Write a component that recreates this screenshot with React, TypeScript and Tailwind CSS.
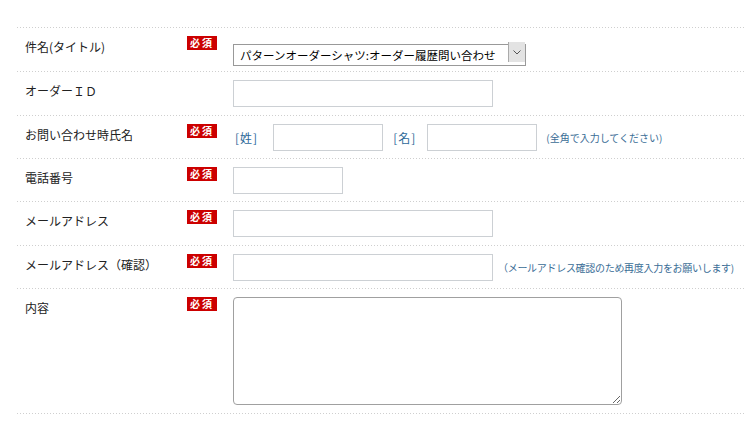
import type { ReactNode } from "react";

const FONT = { fontFamily: '"Noto Sans CJK JP", "Noto Sans", sans-serif' };

function Dots() {
  return (
    <div className="h-px w-full bg-[linear-gradient(to_right,#cfcfcf_1px,transparent_1px)] bg-[length:3px_1px] bg-repeat-x" />
  );
}

function Badge() {
  return (
    <span className="block h-[14px] w-[30px] bg-[#cc0000] text-center text-[10px] leading-[14px] font-bold tracking-[2px] text-white">
      必須
    </span>
  );
}

type RowProps = {
  label: string;
  required?: boolean;
  h: string;
  children: ReactNode;
};

function Row({ label, required = true, h, children }: RowProps) {
  return (
    <>
      <Dots />
      <div className={`flex pt-2 ${h}`}>
        <div className="w-[170px] shrink-0 pl-2 text-[12px] leading-[21px] text-[#222]">
          {label}
        </div>
        <div className="w-[46px] shrink-0">{required && <Badge />}</div>
        <div className="flex min-w-0 flex-1 items-start">{children}</div>
      </div>
    </>
  );
}

const inputCls =
  "h-[27px] border border-[#ccd0d4] bg-white px-1 text-[12px] outline-none";

const hintCls = "text-[10px] leading-[27px] whitespace-nowrap text-[#3a6d96]";

export default function App() {
  return (
    <div className="min-h-[422px] bg-white pt-[27px] pl-[17px]" style={FONT}>
      <Row label="件名(タイトル)" h="h-[43px]">
        <div className="relative mt-[5px] h-[22px] w-[293px]">
          <select className="h-full w-full appearance-none border border-[#999] bg-white pl-[6px] text-[11.5px] leading-[20px] text-black outline-none">
            <option>パターンオーダーシャツ:オーダー履歴問い合わせ</option>
          </select>
          {/* dropdown arrow box */}
          <span className="pointer-events-none absolute top-px right-px flex h-[20px] w-[17px] items-center justify-center border-l border-[#aaa] bg-[#e3e3e3]">
            <svg width="8" height="5" viewBox="0 0 8 5" fill="none">
              <path d="M0.5 0.5L4 4L7.5 0.5" stroke="#555" strokeWidth="1" />
            </svg>
          </span>
        </div>
      </Row>

      <Row label="オーダーＩＤ" required={false} h="h-[43px]">
        <input className={`${inputCls} w-[260px]`} />
      </Row>

      <Row label="お問い合わせ時氏名" h="h-[42px]">
        <div className="flex items-center">
          <span className="ml-[2px] text-[12px] leading-[27px] tracking-[1px] text-[#2e6a9a]">[姓]</span>
          <input className={`${inputCls} ml-[15px] w-[110px]`} />
          <span className="ml-[10px] text-[12px] leading-[27px] tracking-[1px] text-[#2e6a9a]">[名]</span>
          <input className={`${inputCls} ml-[11px] w-[110px]`} />
          <span className={`${hintCls} ml-[9px]`}>(全角で入力してください)</span>
        </div>
      </Row>

      <Row label="電話番号" h="h-[42px]">
        <input className={`${inputCls} w-[110px]`} />
      </Row>

      <Row label="メールアドレス" h="h-[43px]">
        <input className={`${inputCls} w-[260px]`} />
      </Row>

      <Row label="メールアドレス（確認）" h="h-[42px]">
        <div className="flex items-center">
          <input className={`${inputCls} w-[260px]`} />
          <span className={`${hintCls} ml-[5px] tracking-[-0.3px]`}>
            （メールアドレス確認のため再度入力をお願いします)
          </span>
        </div>
      </Row>

      <Row label="内容" h="h-[124px]">
        <textarea className="h-[108px] w-[389px] rounded-[4px] border border-[#a0a0a0] bg-white p-1 text-[12px] outline-none" />
      </Row>
      <Dots />
    </div>
  );
}
